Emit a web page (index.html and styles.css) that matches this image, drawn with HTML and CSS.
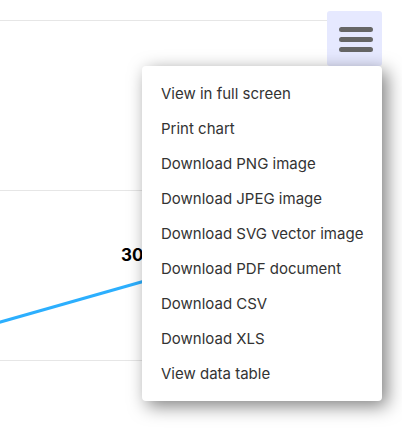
FILE: index.html
```html
<!DOCTYPE html>
<html>
<head>
<meta charset="utf-8">
<link rel="stylesheet" href="styles.css">
</head>
<body>
<div class="chart">
  <svg class="plot" width="402" height="438" viewBox="0 0 402 438">
    <line x1="0" y1="20.5" x2="382" y2="20.5" class="grid"/>
    <line x1="0" y1="190.5" x2="382" y2="190.5" class="grid"/>
    <line x1="0" y1="360.5" x2="382" y2="360.5" class="grid"/>
    <polyline points="-10,325 180,271" class="series"/>
    <text x="121" y="261" class="label">30</text>
  </svg>
  <button class="menu-btn" aria-label="Chart context menu">
    <svg width="55" height="55" viewBox="0 0 55 55">
      <path d="M14.5 18.5H43.5M14.5 28.5H43.5M14.5 38.5H43.5" class="burger"/>
    </svg>
  </button>
  <ul class="menu">
    <li>View in full screen</li>
    <li>Print chart</li>
    <li>Download PNG image</li>
    <li>Download JPEG image</li>
    <li>Download SVG vector image</li>
    <li>Download PDF document</li>
    <li>Download CSV</li>
    <li>Download XLS</li>
    <li>View data table</li>
  </ul>
</div>
</body>
</html>
```
FILE: styles.css
```css
html, body {
  margin: 0;
  padding: 0;
  background: #ffffff;
}
.chart {
  position: relative;
  width: 402px;
  height: 438px;
  overflow: hidden;
  font-family: Inter, "Noto Sans", sans-serif;
}
.plot {
  display: block;
}
.grid {
  stroke: #e6e6e6;
  stroke-width: 1;
}
.series {
  stroke: #2caffe;
  stroke-width: 3;
  fill: none;
}
.label {
  font-family: Inter, sans-serif;
  font-weight: 700;
  font-size: 17px;
  fill: #000000;
}
.menu-btn {
  position: absolute;
  left: 327px;
  top: 11px;
  width: 55px;
  height: 55px;
  padding: 0;
  margin: 0;
  border: none;
  border-radius: 3px;
  background: #e6e9ff;
}
.menu-btn svg {
  display: block;
}
.burger {
  stroke: #666666;
  stroke-width: 5;
  stroke-linecap: round;
  fill: none;
}
.menu {
  position: absolute;
  left: 142px;
  top: 66px;
  width: 240px;
  box-sizing: border-box;
  margin: 0;
  padding: 10px 0;
  list-style: none;
  background: #ffffff;
  border-radius: 4px;
  box-shadow: 5px 5px 18px rgba(0, 0, 0, 0.5);
}
.menu li {
  height: 35px;
  line-height: 35px;
  padding: 0 19px;
  font-size: 15px;
  color: #333333;
  white-space: nowrap;
}
```
